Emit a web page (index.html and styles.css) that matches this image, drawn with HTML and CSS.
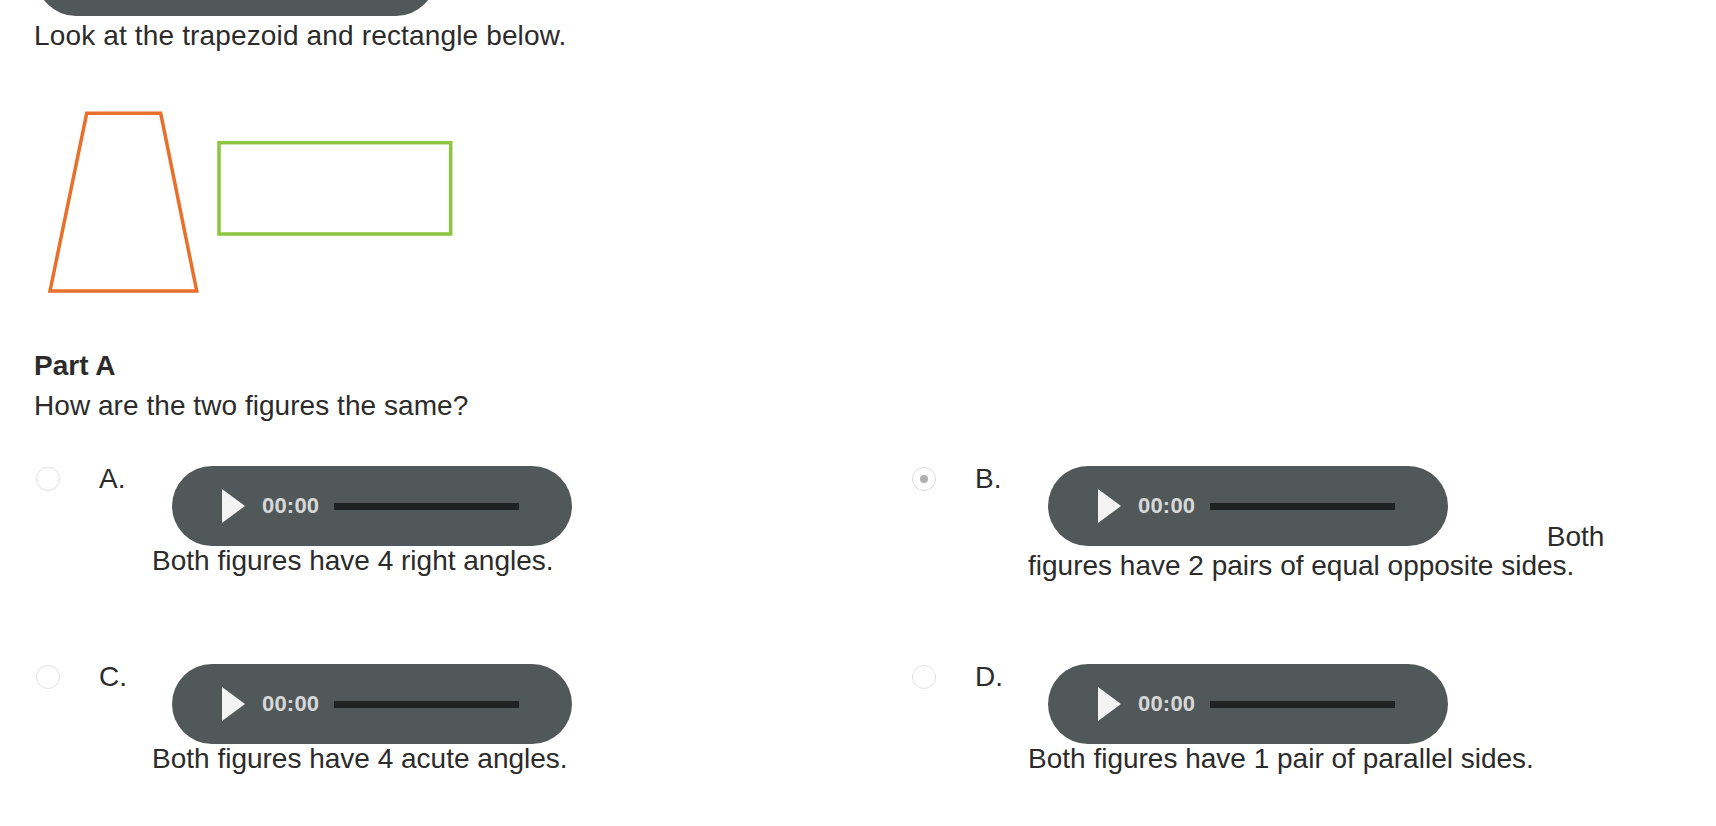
FILE: index.html
```html
<!DOCTYPE html>
<html lang="en">
<head>
<meta charset="utf-8">
<title>Trapezoid and rectangle</title>
<link rel="stylesheet" href="styles.css">
</head>
<body>
<div class="page">
  <div class="player player--top" aria-hidden="true"></div>

  <p class="stem">Look at the trapezoid and rectangle below.</p>

  <svg class="figure" width="420" height="200" viewBox="0 0 420 200">
    <polygon points="46.7,13.3 120.7,13.3 156.7,191 10,191" fill="none" stroke="#e8702b" stroke-width="3.5"/>
    <rect x="179" y="42.7" width="231.7" height="91.3" fill="none" stroke="#8cc63f" stroke-width="3.5"/>
  </svg>

  <p class="part">Part A</p>
  <p class="question">How are the two figures the same?</p>

  <div class="options">
    <div class="option">
      <span class="radio"></span>
      <span class="label">A.</span>
      <div class="content">
        <div class="player">
          <svg class="play" width="23" height="34" viewBox="0 0 23 34"><polygon points="0,0 23,17 0,34"/></svg>
          <span class="time">00:00</span>
          <span class="track"></span>
        </div>
        <div class="answer">Both figures have 4 right angles.</div>
      </div>
    </div>

    <div class="option">
      <span class="radio radio--checked"></span>
      <span class="label">B.</span>
      <div class="content"><span class="player-box"><span class="player">
          <svg class="play" width="23" height="34" viewBox="0 0 23 34"><polygon points="0,0 23,17 0,34"/></svg>
          <span class="time">00:00</span>
          <span class="track"></span>
        </span></span> Both<br>figures have 2 pairs of equal opposite sides.</div>
    </div>

    <div class="option">
      <span class="radio"></span>
      <span class="label">C.</span>
      <div class="content">
        <div class="player">
          <svg class="play" width="23" height="34" viewBox="0 0 23 34"><polygon points="0,0 23,17 0,34"/></svg>
          <span class="time">00:00</span>
          <span class="track"></span>
        </div>
        <div class="answer">Both figures have 4 acute angles.</div>
      </div>
    </div>

    <div class="option">
      <span class="radio"></span>
      <span class="label">D.</span>
      <div class="content">
        <div class="player">
          <svg class="play" width="23" height="34" viewBox="0 0 23 34"><polygon points="0,0 23,17 0,34"/></svg>
          <span class="time">00:00</span>
          <span class="track"></span>
        </div>
        <div class="answer">Both figures have 1 pair of parallel sides.</div>
      </div>
    </div>
  </div>
</div>
</body>
</html>
```

FILE: styles.css
```css
html, body {
  margin: 0;
  padding: 0;
  background: #ffffff;
}

body {
  font-family: "Liberation Sans", Arial, Helvetica, sans-serif;
  font-size: 28px;
  color: #2b2b2b;
}

.page {
  padding: 0 33px 0 34px;
  overflow: hidden;
  height: 826px;
  box-sizing: border-box;
}

p {
  margin: 0;
  line-height: 32px;
}

/* audio player pill */
.player {
  display: flex;
  align-items: center;
  box-sizing: border-box;
  width: 400px;
  height: 80px;
  padding-left: 50px;
  border-radius: 40px;
  background: #51585a;
}

.player--top {
  margin: -64px 0 0 2px;
}

.play {
  display: block;
  flex: none;
  fill: #f3f3f3;
}

.time {
  flex: none;
  margin-left: 17px;
  font-size: 22px;
  font-weight: bold;
  line-height: 24px;
  color: #d8d8d8;
  letter-spacing: 0.2px;
}

.track {
  display: block;
  flex: none;
  width: 185px;
  height: 7px;
  margin-left: 15px;
  background: #1f2223;
}

.stem {
  margin-top: 4px;
  letter-spacing: 0.15px;
}

.figure {
  display: block;
  margin: 48px 0 0 6px;
}

.part {
  margin-top: 50px;
  font-weight: bold;
}

.question {
  margin-top: 8px;
  letter-spacing: 0.05px;
}

.options {
  display: grid;
  grid-template-columns: 876px 1fr;
  row-gap: 84px;
  margin-top: 44px;
}

.option {
  display: flex;
  align-items: flex-start;
}

.radio {
  flex: none;
  box-sizing: border-box;
  width: 24px;
  height: 24px;
  margin: 1px 39px 0 2px;
  border: 1.5px solid #e2e2e2;
  border-radius: 50%;
  background: #ffffff;
  display: flex;
  align-items: center;
  justify-content: center;
}

.radio--checked {
  border-color: #dcdcdc;
}

.radio--checked::after {
  content: "";
  width: 8px;
  height: 8px;
  border-radius: 50%;
  background: #b0b0b0;
}

.label {
  flex: none;
  width: 53px;
  line-height: 26px;
}

.content {
  flex: 1;
  line-height: 29px;
}

.content .player {
  margin-left: 20px;
}

.player-box {
  display: inline-block;
  vertical-align: baseline;
  overflow: hidden;
  margin-right: 91px;
}
```
